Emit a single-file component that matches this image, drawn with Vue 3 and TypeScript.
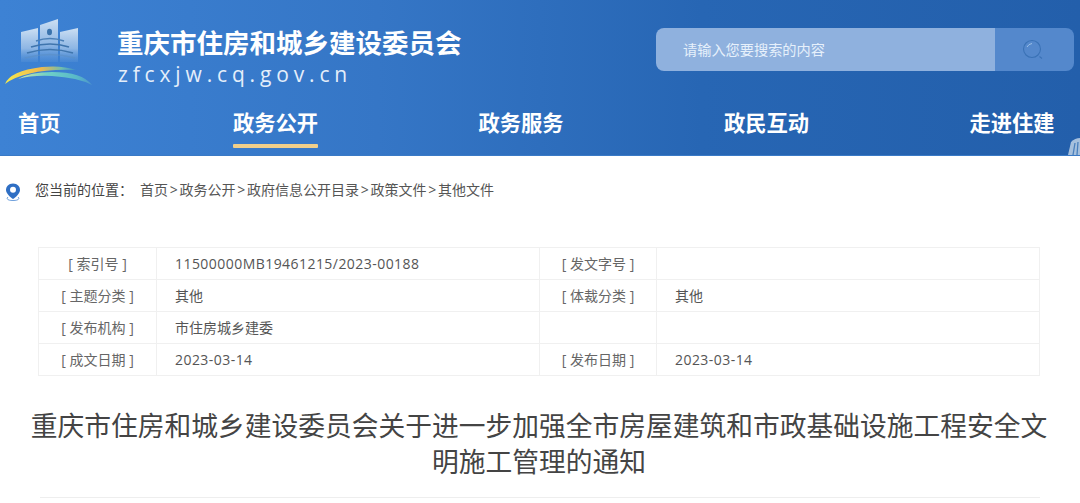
<template>
  <div class="page">
    <header class="site-header">
      <div class="brand-row">
        <div class="brand">
          <svg class="logo" width="92" height="90" viewBox="0 0 92 90" fill="none">
            <defs>
              <linearGradient id="panel" x1="0" y1="0" x2="0" y2="1">
                <stop offset="0" stop-color="#d5e5f5" stop-opacity="0.95" />
                <stop offset="0.6" stop-color="#a9c8ea" stop-opacity="0.75" />
                <stop offset="1" stop-color="#6fa3dc" stop-opacity="0.2" />
              </linearGradient>
              <linearGradient id="arcTop" x1="0" y1="0" x2="1" y2="0">
                <stop offset="0" stop-color="#f4ea4c" />
                <stop offset="0.5" stop-color="#f1b94c" />
                <stop offset="0.8" stop-color="#6fbcae" />
                <stop offset="1" stop-color="#3f8fc8" />
              </linearGradient>
              <linearGradient id="arcLow" x1="0" y1="0" x2="1" y2="0">
                <stop offset="0" stop-color="#cfe6a0" />
                <stop offset="0.4" stop-color="#6fd0c8" />
                <stop offset="0.8" stop-color="#58b8c8" />
                <stop offset="1" stop-color="#4d94cc" />
              </linearGradient>
            </defs>
            <path d="M21 32 L38 28 V62 H21 Z" fill="url(#panel)" />
            <path d="M40 25 L58 19 V62 H40 Z" fill="url(#panel)" />
            <path d="M60 32 L78 28 V62 H60 Z" fill="url(#panel)" />
            <ellipse cx="49.500" cy="32" rx="2.500" ry="3.300" fill="#3a73ad" />
            <path d="M36 41 Q50 36 64 41" stroke="#4a7fb6" stroke-width="1.500" />
            <path d="M31 47 Q50 41 69 47" stroke="#3f75ad" stroke-width="1.700" />
            <path d="M27 53 Q50 46 73 53" stroke="#3f75ad" stroke-width="1.700" />
            <path d="M25 58 Q50 51 75 58" stroke="#5c8fc4" stroke-width="1.300" opacity="0.6" />
            <path d="M5 84 Q10 71 42 67 Q62 65 76 70 Q48 69 30 73.500 Q14 77 5 84 Z" fill="url(#arcTop)" />
            <path d="M18 79 Q30 72 52 72 Q82 72 92 85 Q78 77.500 52 76 Q32 75 18 79 Z" fill="url(#arcLow)" />
          </svg>
          <div class="brand-text">
            <h1 class="brand-title">重庆市住房和城乡建设委员会</h1>
            <div class="brand-domain">zfcxjw.cq.gov.cn</div>
          </div>
        </div>
        <div class="search">
          <div class="search-input">请输入您要搜索的内容</div>
          <div class="search-btn">
            <svg width="22" height="22" viewBox="0 0 22 22" fill="none">
              <circle cx="10" cy="10" r="8.500" stroke="#3a72b6" stroke-width="1.100" />
              <path d="M17.500 17.500 L20 19.500" stroke="#3a72b6" stroke-width="1.100" />
              <path d="M5 8 Q6.500 5 10 4.500" stroke="#9cc0e6" stroke-width="1" />
            </svg>
          </div>
        </div>
      </div>
      <nav class="nav">
        <a v-for="item in navItems" :key="item" class="nav-item" :class="{ active: item === '政务公开' }">{{ item }}</a>
      </nav>
      <svg class="corner" width="14" height="18" viewBox="0 0 14 18" fill="none">
        <path d="M2 18 L5 5 Q9 1 14 1 V18 Z" fill="#c7d8ea" opacity="0.8" />
        <path d="M7 18 L9 6 M11 18 L12 5" stroke="#4a80bd" stroke-width="1.300" />
      </svg>
    </header>

    <div class="crumbs">
      <svg class="pin" width="16" height="18" viewBox="0 0 16 18" fill="none">
        <path d="M8 0.500 C3.500 0.500 1 3.500 1 7 C1 10.500 5 14 8 16 C11 14 15 10.500 15 7 C15 3.500 12.500 0.500 8 0.500 Z" fill="#2f6fc4" />
        <circle cx="8" cy="6.800" r="3" fill="#fff" />
        <path d="M3 14 C0.500 16.500 4 17.500 8 17.500 C12 17.500 15.500 16.500 13 14" stroke="#6fa0dc" stroke-width="1" />
      </svg>
      <span class="crumbs-label">您当前的位置：</span>
      <span class="crumbs-path">
        <template v-for="(crumb, i) in crumbs" :key="crumb">
          <span v-if="i > 0" class="crumb-sep">&gt;</span>{{ crumb }}
        </template>
      </span>
    </div>

    <table class="meta">
      <colgroup>
        <col class="col-key" />
        <col class="col-val" />
        <col class="col-key-alt" />
        <col />
      </colgroup>
      <tbody>
        <tr v-for="row in metaRows" :key="row[0]">
          <td class="meta-key">{{ row[0] }}</td>
          <td class="meta-val" :class="{ latin: isLatin(row[1]) }">{{ row[1] }}</td>
          <td class="meta-key">{{ row[2] }}</td>
          <td class="meta-val" :class="{ latin: isLatin(row[3]) }">{{ row[3] }}</td>
        </tr>
      </tbody>
    </table>

    <h2 class="doc-title">重庆市住房和城乡建设委员会关于进一步加强全市房屋建筑和市政基础设施工程安全文明施工管理的通知</h2>
    <div class="doc-rule"></div>
  </div>
</template>

<script setup lang="ts">
const navItems: string[] = ['首页', '政务公开', '政务服务', '政民互动', '走进住建']

const crumbs: string[] = ['首页', '政务公开', '政府信息公开目录', '政策文件', '其他文件']

const metaRows: string[][] = [
  ['[ 索引号 ]', '11500000MB19461215/2023-00188', '[ 发文字号 ]', ''],
  ['[ 主题分类 ]', '其他', '[ 体裁分类 ]', '其他'],
  ['[ 发布机构 ]', '市住房城乡建委', '', ''],
  ['[ 成文日期 ]', '2023-03-14', '[ 发布日期 ]', '2023-03-14'],
]

const isLatin = (text: string): boolean => /^[\x20-\x7e]+$/.test(text)
</script>

<style>
html,
body {
  margin: 0;
  background: #fff;
  overflow: hidden;
}
</style>

<style scoped>
.page {
  width: 1080px;
  height: 503px;
  overflow: hidden;
  font-family: "Open Sans", "Noto Sans CJK SC", sans-serif;
  color: #555;
}

.site-header {
  position: relative;
  height: 155px;
  background: linear-gradient(90deg, #3d82d4 0%, #3576c6 35%, #2766b4 65%, #235fab 100%);
  border-bottom: 1px solid #3a7ac6;
  overflow: hidden;
}

.brand-row {
  display: flex;
  justify-content: space-between;
  height: 100px;
  padding-right: 6px;
}

.brand {
  display: flex;
}

.logo {
  flex-shrink: 0;
}

.brand-text {
  margin-left: 25px;
  padding-top: 24px;
}

.brand-title {
  margin: 0;
  font-family: "Noto Sans CJK SC", sans-serif;
  font-size: 26.500px;
  line-height: 35px;
  font-weight: 700;
  color: #fff;
  white-space: nowrap;
}

.brand-domain {
  padding-left: 1px;
  font-size: 21px;
  line-height: 30px;
  letter-spacing: 4.850px;
  color: #e4eefa;
  white-space: nowrap;
}

.search {
  display: flex;
  width: 418px;
  height: 43px;
  margin-top: 28px;
  border-radius: 8px;
  overflow: hidden;
}

.search-input {
  flex: 1;
  padding-left: 27px;
  font-family: "Noto Sans CJK SC", sans-serif;
  font-size: 14.200px;
  line-height: 43px;
  color: #e6f0fb;
  background: #8fb1de;
}

.search-btn {
  width: 79px;
  padding-right: 4px;
  box-sizing: border-box;
  display: flex;
  align-items: center;
  justify-content: center;
  background: #5488cc;
}

.nav {
  display: flex;
  padding-left: 18px;
  gap: 160.300px;
}

.nav-item {
  position: relative;
  height: 48px;
  font-family: "Noto Sans CJK SC", sans-serif;
  font-size: 21.300px;
  line-height: 44px;
  font-weight: 700;
  color: #fff;
  white-space: nowrap;
}

.nav-item:first-child {
  margin-right: 12px;
}

.nav-item.active::after {
  content: "";
  position: absolute;
  left: 0;
  right: 0;
  bottom: 0;
  height: 4px;
  border-radius: 1px;
  background: #f1cf8a;
}

.corner {
  position: absolute;
  right: 0;
  bottom: 0;
}

.crumbs {
  display: flex;
  align-items: center;
  height: 24px;
  margin-top: 22px;
  padding-left: 5px;
  font-size: 14px;
  line-height: 20px;
  color: #555;
  white-space: nowrap;
}

.pin {
  margin-top: 3px;
}

.crumbs-label {
  width: 105px;
  margin-left: 14px;
  color: #444;
}

.crumb-sep {
  display: inline-block;
  width: 11.500px;
  text-align: center;
}

.meta {
  width: 1002px;
  margin: 45px 0 0 38px;
  border-collapse: collapse;
  table-layout: fixed;
  font-size: 14px;
}

.col-key {
  width: 118px;
}

.col-val {
  width: 383px;
}

.col-key-alt {
  width: 117px;
}

.meta td {
  height: 32px;
  padding: 0;
  box-sizing: border-box;
  border: 1px solid #f0f0f0;
  line-height: 20px;
}

.meta-key {
  text-align: center;
  color: #666;
}

.meta .meta-val {
  padding-left: 18px;
  color: #555;
}

.meta .latin {
  letter-spacing: 0.450px;
}

.doc-title {
  width: 1030px;
  box-sizing: border-box;
  margin: 31px auto 0;
  padding-right: 2px;
  font-family: "Noto Sans CJK SC", sans-serif;
  font-size: 26.750px;
  line-height: 36px;
  font-weight: 400;
  text-align: center;
  color: #444;
}

.doc-rule {
  height: 1px;
  margin: 18px 40px 0;
  background: #eee;
}
</style>
